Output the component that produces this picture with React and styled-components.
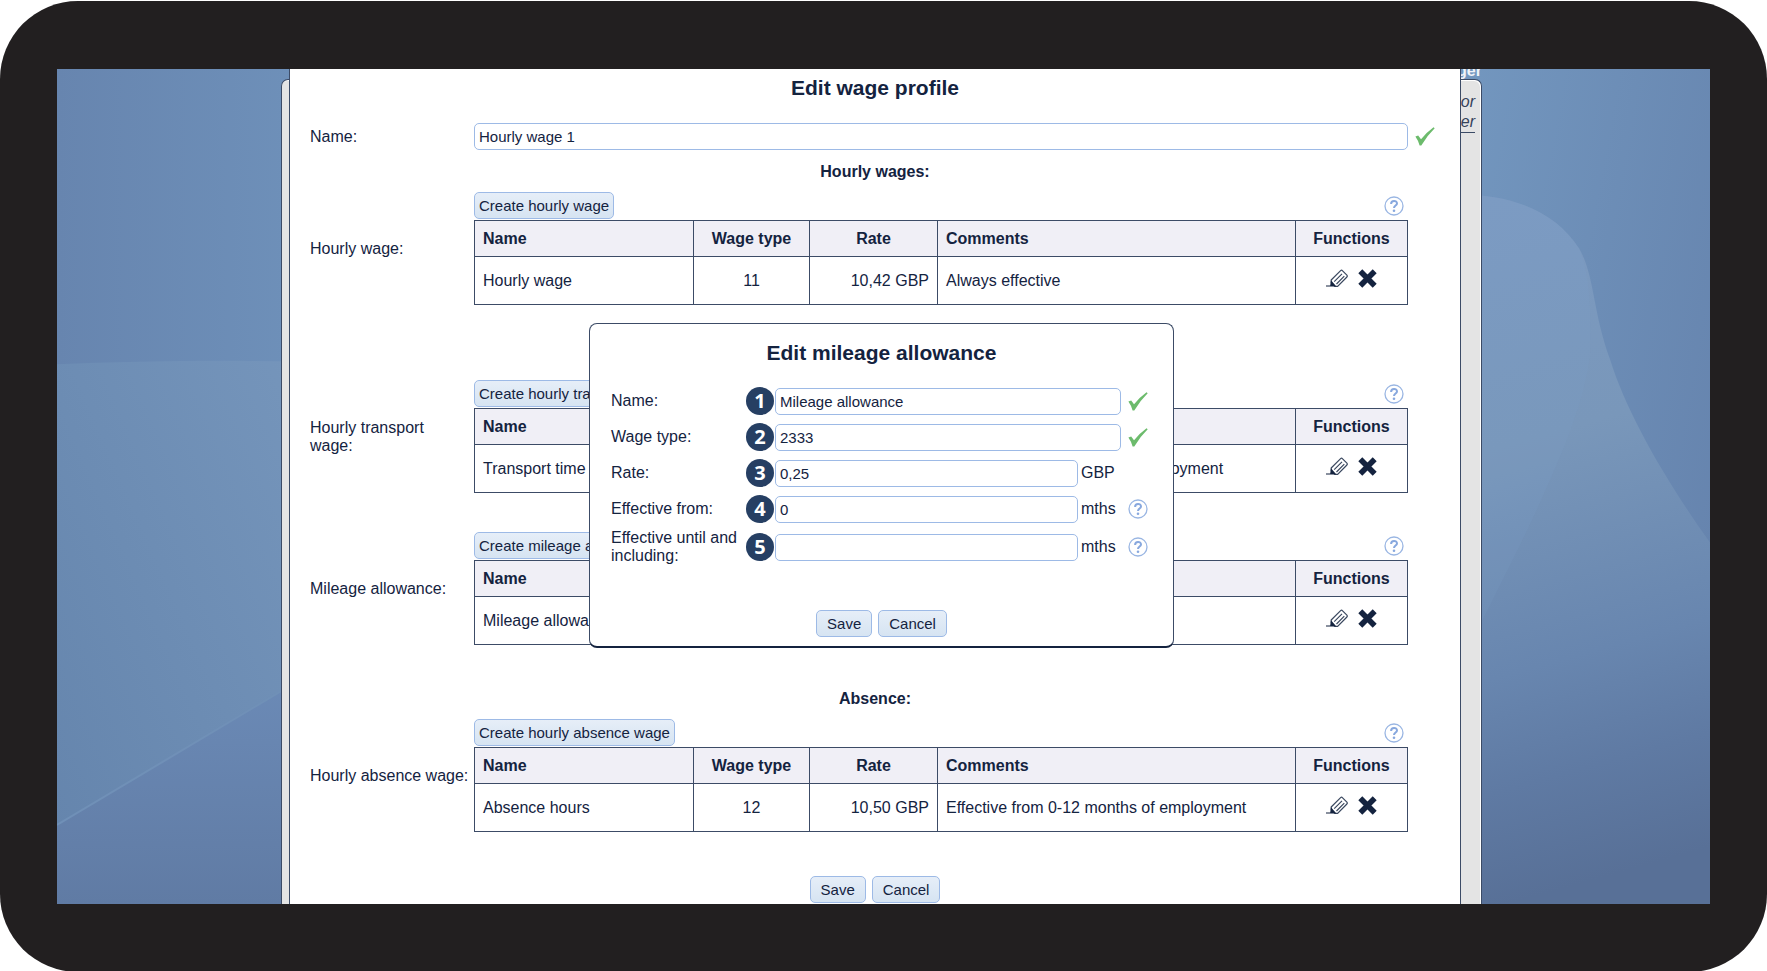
import React from "react";
import styled, { createGlobalStyle } from "styled-components";

const ink = "#14233f";
const line = "#3c4b66";
const blue = "#9dbae6";

const Global = createGlobalStyle`
  *, *::before, *::after { box-sizing: border-box; }
  body {
    margin: 0;
    background: #fff;
    color: ${ink};
    font: 16px/18px "Liberation Sans", Arial, sans-serif;
  }
`;

/* Tablet bezel */
const Device = styled.div`
  margin-top: 1px;
  padding: 68px 57px;
  border-radius: 78px;
  background: #221f20;
`;

const Screen = styled.div`
  position: relative;
  display: grid;
  overflow: hidden;
  background: #6b8ab3;
  > * { grid-area: 1 / 1; min-width: 0; }
`;

const WallpaperSvg = styled.svg`
  position: absolute;
  inset: 0;
  width: 100%;
  height: 100%;
`;

/* Page lying behind the dialogs */
const Page = styled.div`
  position: relative;
  display: flex;
  flex-direction: column;
  margin: 0 228px 0 224px;
`;

const PageHeader = styled.div`
  display: flex;
  align-items: flex-end;
  justify-content: flex-end;
  height: 10px;
  color: #f0f3f8;
  font-weight: bold;
  line-height: 16px;
`;

const PagePanel = styled.div`
  flex: 1;
  display: flex;
  flex-direction: column;
  align-items: flex-end;
  padding: 12px 6px 0;
  border: 1px solid ${line};
  border-bottom: 0;
  border-radius: 7px 7px 0 0;
  background: #e4e4e4;
  box-shadow: inset -1px 1px #fff;
  color: #35425a;
  font-style: italic;
  line-height: 20px;
`;

const PageLink = styled.a`
  color: inherit;
  text-decoration: none;
  border-bottom: 1px solid ${line};
`;

const Dialog = styled.section`
  position: relative;
  margin: 0 249px 0 232px;
  padding: 7px 0 1px;
  border: solid ${line};
  border-width: 0 1px;
  background: #fff;
`;

const Title = styled.h1`
  margin: 0;
  font-size: 21px;
  line-height: 24px;
  text-align: center;
`;

const Group = styled.h2`
  margin: ${(p) => (p.$spaced ? 44 : 12)}px 0 10px;
  font-size: 16px;
  line-height: 20px;
  text-align: center;
`;

const Entry = styled.div`
  display: grid;
  grid-template-columns: 164px minmax(0, 1fr) 52px;
  align-items: center;
  margin-top: ${(p) => p.$top || 0}px;
  padding-left: 20px;
`;

const EntryLabel = styled.div`
  padding-right: 4px;
`;

const Field = styled.input`
  flex: 1;
  width: 100%;
  min-width: 0;
  height: 27px;
  padding: 0 4px;
  border: 1px solid ${blue};
  border-radius: 5px;
  background: #fff;
  color: ${ink};
  font: 15px "Liberation Sans", Arial, sans-serif;
`;

const Button = styled.button`
  height: 27px;
  padding: 0 ${(p) => (p.$compact ? 4 : 10)}px;
  border: 1px solid ${blue};
  border-radius: 5px;
  background: linear-gradient(#e6eef8, #d6e4f2);
  color: ${ink};
  font: 15px "Liberation Sans", Arial, sans-serif;
  white-space: nowrap;
`;

const Actions = styled.div`
  display: flex;
  justify-content: center;
  gap: 6px;
  margin-top: ${(p) => p.$top}px;
`;

const Toolbar = styled.div`
  display: flex;
  align-items: center;
  justify-content: space-between;
  height: 28px;
  padding: 0 4px 1px 0;
`;

const Table = styled.table`
  width: 100%;
  border-collapse: collapse;
  table-layout: fixed;
`;

const HeadCell = styled.th`
  width: ${(p) => p.$width || "auto"};
  height: 36px;
  padding: 0 8px;
  border: 1px solid ${line};
  background: #f0eff6;
  text-align: ${(p) => p.$align || "left"};
`;

const Cell = styled.td`
  height: 48px;
  padding: 0 8px;
  border: 1px solid ${line};
  text-align: ${(p) => p.$align || "left"};
`;

const Tools = styled.div`
  display: flex;
  justify-content: center;
  gap: 10px;
  padding-bottom: 4px;
`;

const ToolButton = styled.button`
  display: flex;
  padding: 0;
  border: 0;
  background: none;
`;

const IconSlot = styled.span`
  display: flex;
  padding-left: 7px;
`;

const ModalLayer = styled.div`
  position: absolute;
  inset: 0;
  display: flex;
  align-items: flex-start;
  justify-content: center;
  padding: 254px 4px 0 0;
`;

const Modal = styled.section`
  width: 585px;
  padding: 17px 21px 9px;
  border: 1px solid ${line};
  border-bottom: 2px solid ${ink};
  border-radius: 8px;
  background: #fff;
`;

const ModalForm = styled.form`
  margin-top: 18px;
`;

const ModalRow = styled.div`
  display: grid;
  grid-template-columns: 134px 30px 346px 1fr;
  align-items: center;
  min-height: ${(p) => (p.$tall ? 40 : 36)}px;
`;

const Badge = styled.span`
  justify-self: center;
  width: 28px;
  height: 28px;
  border-radius: 50%;
  background: #263f63;
  color: #fff;
  font: bold 20px/28px "Open Sans", "Noto Sans", sans-serif;
  text-align: center;
`;

const Value = styled.div`
  display: flex;
  align-items: center;
`;

const Unit = styled.span`
  flex: 0 0 43px;
  padding-left: 3px;
`;

function Wallpaper() {
  return (
    <WallpaperSvg viewBox="0 0 1653 834" preserveAspectRatio="none" aria-hidden="true">
      <defs>
        <linearGradient id="skyLeft" x1="0" y1="0" x2="1" y2="0">
          <stop offset="0" stopColor="#6785af" />
          <stop offset="1" stopColor="#6e90b9" />
        </linearGradient>
        <linearGradient id="midLeft" x1="1" y1="0" x2="0" y2="1">
          <stop offset="0" stopColor="#7595bb" />
          <stop offset="1" stopColor="#6484ac" />
        </linearGradient>
        <linearGradient id="lowLeft" x1="0" y1="0" x2="0" y2="1">
          <stop offset="0" stopColor="#6b8ab6" />
          <stop offset="1" stopColor="#607ba4" />
        </linearGradient>
        <linearGradient id="skyRight" x1="0" y1="0" x2="1" y2="0.6">
          <stop offset="0" stopColor="#7397bf" />
          <stop offset="1" stopColor="#6684ae" />
        </linearGradient>
        <linearGradient id="waveRight" x1="0.1" y1="0" x2="0.2" y2="1">
          <stop offset="0" stopColor="#7c9ac1" />
          <stop offset="0.36" stopColor="#7997ba" />
          <stop offset="0.68" stopColor="#6886af" />
          <stop offset="0.84" stopColor="#5f7aa3" />
          <stop offset="1" stopColor="#587097" />
        </linearGradient>
      </defs>
      <rect width="240" height="834" fill="url(#skyLeft)" />
      <path d="M0 295 Q110 290 240 292 V834 H0 Z" fill="url(#midLeft)" />
      <path d="M0 755 L240 612 V834 H0 Z" fill="url(#lowLeft)" />
      <path d="M0 755 L240 612" stroke="#7090b7" strokeWidth="2" />
      <rect x="1400" width="253" height="834" fill="url(#skyRight)" />
      <path
        d="M1400 125 C1460 125 1500 145 1522 179 C1538 207 1535 240 1553 290 C1570 345 1610 413 1653 473 V834 H1400 Z"
        fill="url(#waveRight)"
      />
      <path
        d="M1400 125 C1460 125 1500 145 1522 179 C1533 205 1534 240 1533 285 C1526 350 1480 445 1400 600 Z"
        fill="#7fa0ca"
        opacity="0.14"
      />
    </WallpaperSvg>
  );
}

function CheckIcon() {
  return (
    <svg width="20" height="19" viewBox="0 0 20 19" role="img" aria-label="Valid">
      <path d="M.4 9.6 3.2 8.6 6 12.2Q11.500 5.500 18.500.3L19.700 1.200Q11.800 8.800 6.300 18.600H4.600Q3.300 13.600.4 9.600Z" fill="#6cbb6c" />
    </svg>
  );
}

function HelpIcon() {
  return (
    <svg width="20" height="20" viewBox="0 0 20 20" role="img" aria-label="Help">
      <circle cx="10" cy="10" r="9" fill="#fff" stroke="#9ab6e3" strokeWidth="1.300" />
      <path d="M7.100 7.900C7.100 4 13 4 13 7.400C13 9.500 10 9.500 10 12" fill="none" stroke="#88a8de" strokeWidth="2" />
      <circle cx="10" cy="14.700" r="1.300" fill="#88a8de" />
    </svg>
  );
}

function PencilIcon() {
  return (
    <svg width="22" height="19" viewBox="0 0 22 19" aria-hidden="true">
      <path
        d="M5.200 11 14.600 1.600Q15.600.8 16.600 1.800L20.900 6.100Q21.700 7 20.900 8L11.600 17.400H8.800L5.200 13.800Z"
        fill="#fff"
        stroke="#3a485f"
        strokeWidth="1.200"
      />
      <path d="M8.200 12.700 16 4.900M10.500 15 18.300 7.200" stroke="#3a485f" strokeWidth="1.200" />
      <path d="M5 11.200 10.400 17.600H0V16.400H4.200Z" fill={ink} />
    </svg>
  );
}

function CrossIcon() {
  return (
    <svg width="19" height="19" viewBox="0 0 19 19" aria-hidden="true">
      <path d="M2.300 2.300 16.700 16.700M16.700 2.300 2.300 16.700" stroke={ink} strokeWidth="5.600" />
    </svg>
  );
}

function WageSection({ label, create, row, top }) {
  return (
    <Entry $top={top}>
      <EntryLabel>{label}</EntryLabel>
      <div>
        <Toolbar>
          <Button type="button" $compact>{create}</Button>
          <HelpIcon />
        </Toolbar>
        <Table aria-label={label}>
          <thead>
            <tr>
              <HeadCell $width="219px">Name</HeadCell>
              <HeadCell $width="116px" $align="center">Wage type</HeadCell>
              <HeadCell $width="128px" $align="center">Rate</HeadCell>
              <HeadCell>Comments</HeadCell>
              <HeadCell $width="112px" $align="center">Functions</HeadCell>
            </tr>
          </thead>
          <tbody>
            <tr>
              <Cell>{row.name}</Cell>
              <Cell $align="center">{row.type}</Cell>
              <Cell $align="right">{row.rate}</Cell>
              <Cell>{row.comment}</Cell>
              <Cell>
                <Tools>
                  <ToolButton type="button" aria-label="Edit"><PencilIcon /></ToolButton>
                  <ToolButton type="button" aria-label="Delete"><CrossIcon /></ToolButton>
                </Tools>
              </Cell>
            </tr>
          </tbody>
        </Table>
      </div>
    </Entry>
  );
}

const fields = [
  { id: "allowance-name", label: "Name:", value: "Mileage allowance", icon: <CheckIcon /> },
  { id: "allowance-type", label: "Wage type:", value: "2333", icon: <CheckIcon /> },
  { id: "allowance-rate", label: "Rate:", value: "0,25", unit: "GBP" },
  { id: "allowance-from", label: "Effective from:", value: "0", unit: "mths", icon: <HelpIcon /> },
  { id: "allowance-until", label: "Effective until and including:", value: "", unit: "mths", icon: <HelpIcon />, tall: true },
];

export default function App() {
  return (
    <>
      <Global />
      <Device>
        <Screen>
          <Wallpaper />
          <Page>
            <PageHeader>ger</PageHeader>
            <PagePanel>
              <span>or</span>
              <PageLink href="#">er</PageLink>
            </PagePanel>
          </Page>

          <Dialog aria-label="Edit wage profile">
            <Title>Edit wage profile</Title>
            <Entry $top={23}>
              <label htmlFor="profile-name">Name:</label>
              <Field id="profile-name" defaultValue="Hourly wage 1" />
              <IconSlot><CheckIcon /></IconSlot>
            </Entry>
            <Group>Hourly wages:</Group>
            <WageSection
              label="Hourly wage:"
              create="Create hourly wage"
              row={{ name: "Hourly wage", type: "11", rate: "10,42 GBP", comment: "Always effective" }}
            />
            <WageSection
              top={75}
              label="Hourly transport wage:"
              create="Create hourly transport wage"
              row={{ name: "Transport time", type: "", rate: "", comment: "Effective from 0 months of employment" }}
            />
            <WageSection
              top={39}
              label="Mileage allowance:"
              create="Create mileage allowance"
              row={{ name: "Mileage allowance", type: "", rate: "", comment: "" }}
            />
            <Group $spaced>Absence:</Group>
            <WageSection
              label="Hourly absence wage:"
              create="Create hourly absence wage"
              row={{ name: "Absence hours", type: "12", rate: "10,50 GBP", comment: "Effective from 0-12 months of employment" }}
            />
            <Actions $top={44}>
              <Button type="button">Save</Button>
              <Button type="button">Cancel</Button>
            </Actions>
          </Dialog>

          <ModalLayer>
            <Modal role="dialog" aria-label="Edit mileage allowance">
              <Title as="h2">Edit mileage allowance</Title>
              <ModalForm>
                {fields.map((f, i) => (
                  <ModalRow key={f.id} $tall={f.tall}>
                    <label htmlFor={f.id}>{f.label}</label>
                    <Badge>{i + 1}</Badge>
                    <Value>
                      <Field id={f.id} defaultValue={f.value} />
                      {f.unit && <Unit>{f.unit}</Unit>}
                    </Value>
                    <IconSlot>{f.icon}</IconSlot>
                  </ModalRow>
                ))}
                <Actions $top={43}>
                  <Button type="button">Save</Button>
                  <Button type="button">Cancel</Button>
                </Actions>
              </ModalForm>
            </Modal>
          </ModalLayer>
        </Screen>
      </Device>
    </>
  );
}
